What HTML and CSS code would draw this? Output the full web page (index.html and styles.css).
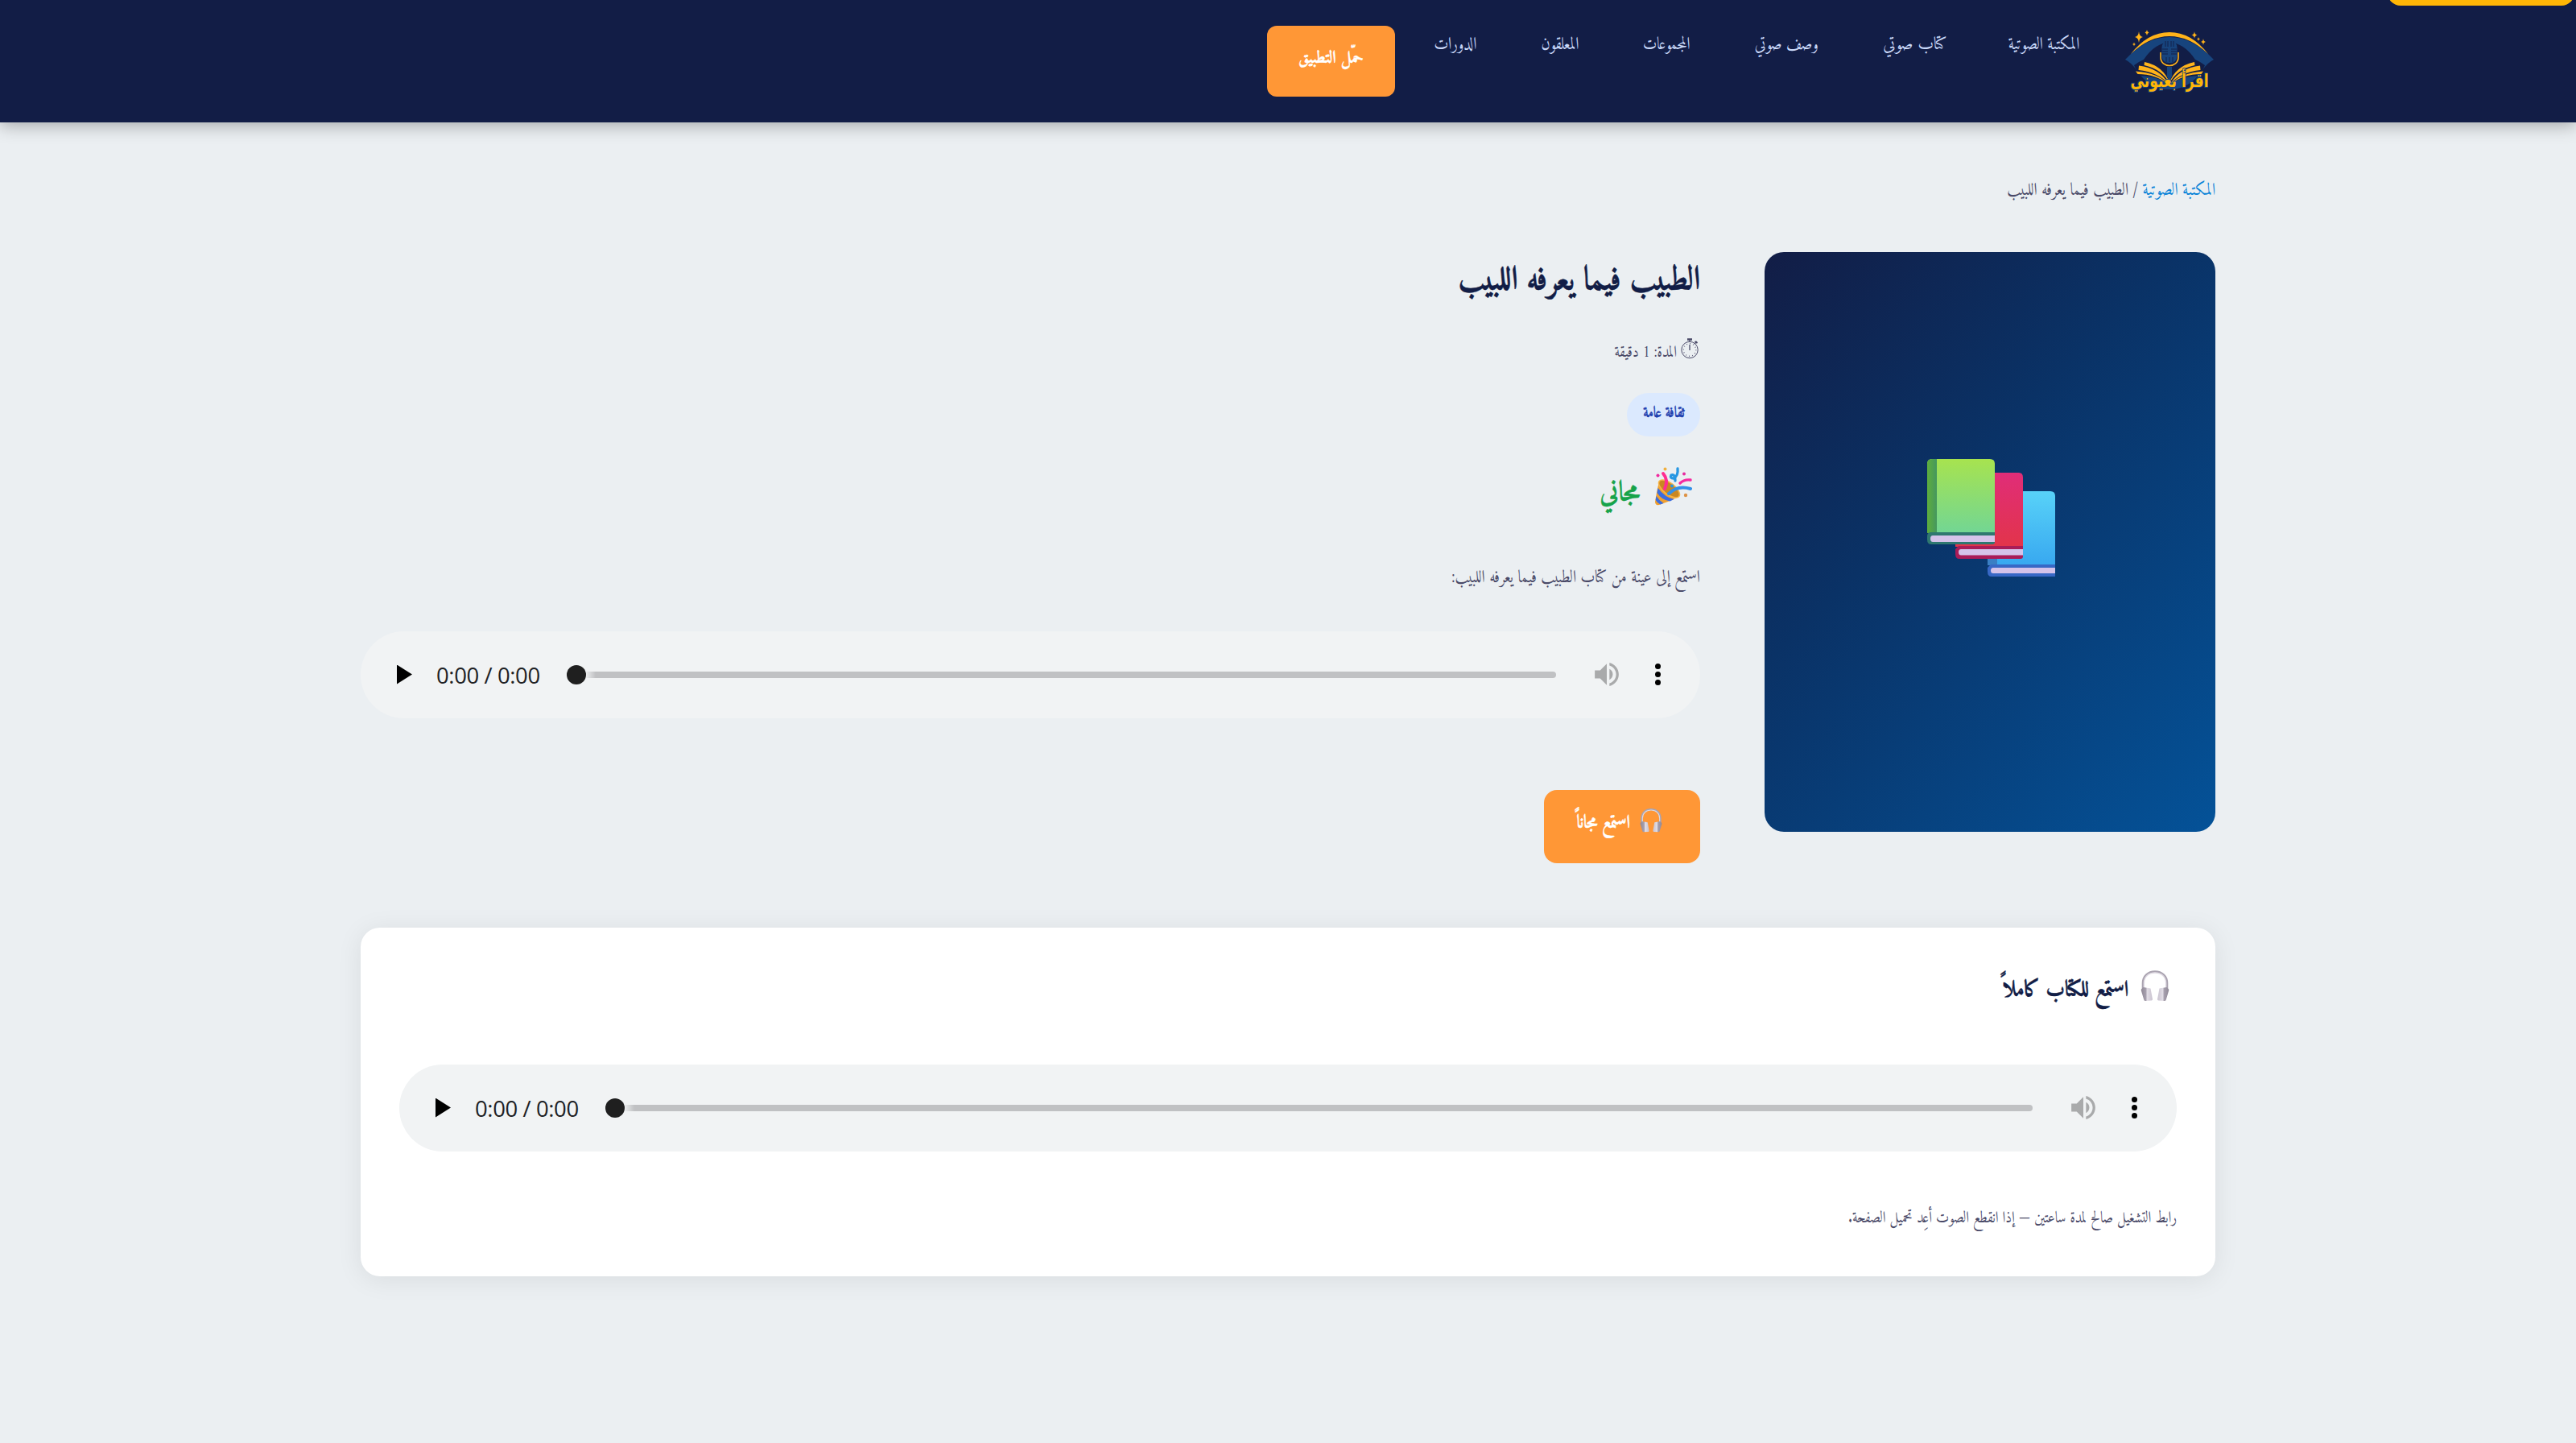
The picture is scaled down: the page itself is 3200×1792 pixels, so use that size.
FILE: index.html
```html
<!DOCTYPE html>
<html lang="ar" dir="rtl">
<head>
<meta charset="utf-8">
<title>الطبيب فيما يعرفه اللبيب</title>
<link rel="stylesheet" href="styles.css">
</head>
<body>
<svg class="defs" aria-hidden="true">
  <defs>
    <linearGradient id="hp" x1="0" y1="0" x2="1" y2="1"><stop offset="0" stop-color="#b5aebb"/><stop offset="1" stop-color="#d8d3dc"/></linearGradient>
    <linearGradient id="cupL" x1="0" x2="1"><stop offset="0" stop-color="#8f8896"/><stop offset=".45" stop-color="#a9a2b0"/><stop offset=".5" stop-color="#e3dfe7"/><stop offset="1" stop-color="#c9c2cf"/></linearGradient>
    <linearGradient id="cupR" x1="1" x2="0"><stop offset="0" stop-color="#8f8896"/><stop offset=".45" stop-color="#a9a2b0"/><stop offset=".5" stop-color="#e3dfe7"/><stop offset="1" stop-color="#c9c2cf"/></linearGradient>
    <symbol id="headphones" viewBox="0 0 36 38">
      <path d="M3 24V16C3 7 9.500 1.500 18 1.500S33 7 33 16v8" fill="none" stroke="#aaa3b0" stroke-width="2.600"/>
      <path d="M4.300 23v-7C4.300 8 10 3 18 3s13.700 5 13.700 13v7" fill="none" stroke="#ddd8e1" stroke-width="1.400"/>
      <path d="M1.500 23l2-2 9 1.500L15 36q0 1.300-1.300 1.500L6 38q-1.300 0-1.700-1.300L.8 25q-.3-1.300.7-2z" fill="url(#cupL)"/>
      <path d="M34.500 23l-2-2-9 1.500L21 36q0 1.300 1.300 1.500l7.700.5q1.300 0 1.700-1.300L35.200 25q.3-1.300-.7-2z" fill="url(#cupR)"/>
    </symbol>
    <symbol id="volume" viewBox="3 3.230 18 17.540"><path d="M3 9v6h4l5 5V4L7 9H3zm13.500 3A4.500 4.500 0 0 0 14 7.970v8.050c1.480-.73 2.500-2.250 2.500-4.020zM14 3.230v2.060c2.890.86 5 3.540 5 6.710s-2.110 5.850-5 6.710v2.060c4.010-.91 7-4.490 7-8.770s-2.990-7.860-7-8.770z"/></symbol>
  </defs>
</svg>

<a class="skip"></a>

<header class="header">
  <div class="header-inner">
    <svg class="logo" viewBox="0 0 110 78">
      <path d="M0 37Q26 9 55 9t55 28q-8 4-14 13-16 24-41 24T14 50Q8 41 0 37z" fill="#17447d"/>
      <path d="M23 37Q37 16 55 16t32 21L80 48 55 62 30 48z" fill="#121d46"/>
      <path d="M11 44l6-4 6-3 12 5 20 23-8-2q-14-6-30-6z" fill="#121d46"/><path d="M99 44l-6-4-6-3-12 5-20 23 8-2q14-6 30-6z" fill="#121d46"/>
      <path d="M7 30Q28 3 55 3t48 27Q80 8 55 8T7 30z" fill="#ffb31a"/>
      <path d="M17 44.500q25 3 37 22.500Q40 52.500 16.500 50zM24 40q24 5 31.500 27Q46 49 23.500 44zM15.500 55l-2.500-3.500q28 2 40.500 16Q38 55 15.500 55z" fill="#ffb31a"/>
      <path d="M93 44.500q-25 3-37 22.500 14-14.500 37.500-17zM86 40q-24 5-31.500 27Q64 49 86.500 44zM94.500 55l2.500-3.500q-28 2-40.500 16Q72 55 94.500 55z" fill="#ffb31a"/>
      <rect x="45.500" y="14" width="19" height="27" rx="8" fill="#17447d"/>
      <path d="M50 14v7M53 14v7M57 14v7M60 14v7M46 24h7M57 24h7M46 27h7M57 27h7M46 30h7M57 30h7M51 34v6M55 34v6M59 34v6" stroke="#121d46" stroke-width=".9"/>
      <path d="M44 28v6c0 14 22 14 22 0v-6" fill="none" stroke="#ffb31a" stroke-width="1.600"/>
      <path d="M52 46h6v12l-3 6-3-6z" fill="#17447d"/>
      <path d="M17 2q.5 6 5 7-4.500 1-5 7-.5-6-5-7 4.500-1 5-7zM27 0q.3 3 2.500 3.500Q27.300 4 27 7q-.3-3-2.500-3.500Q26.700 3 27 0zM11 15.500q.2 2.200 2 2.500-1.800.3-2 2.500-.2-2.200-2-2.500 1.800-.3 2-2.500zM86 2q.3 4 3.500 4.500Q86.300 7 86 11q-.3-4-3.500-4.500Q85.700 6 86 2zM97 11q.3 3.500 3 4-2.700.5-3 4-.3-3.500-3-4 2.700-.5 3-4zM91 9q.2 2.200 2 2.500-1.800.3-2 2.500-.2-2.200-2-2.500 1.800-.3 2-2.500z" fill="#ffb31a"/>
      <text class="logo-text" x="55" y="71" text-anchor="middle" textLength="97" lengthAdjust="spacingAndGlyphs">اقرأ بعيوني</text>
    </svg>
    <nav class="nav">
      <a><span>المكتبة الصوتية</span></a>
      <a><span>كتاب صوتي</span></a>
      <a><span>وصف صوتي</span></a>
      <a><span>المجموعات</span></a>
      <a><span>المعلقون</span></a>
      <a><span>الدورات</span></a>
    </nav>
    <a class="btn download"><span>حمّل التطبيق</span></a>
  </div>
</header>

<main class="main">
  <div class="breadcrumb"><a>المكتبة الصوتية</a> / الطبيب فيما يعرفه اللبيب</div>

  <section class="book">
    <div class="cover">
      <svg width="160" height="146" viewBox="0 0 160 146">
        <defs>
          <linearGradient id="g1" x2="0" y2="1"><stop stop-color="#a7e34f"/><stop offset="1" stop-color="#72d694"/></linearGradient>
          <linearGradient id="g2"><stop stop-color="#5eae3c"/><stop offset="1" stop-color="#45975f"/></linearGradient>
          <linearGradient id="r1" x2="0" y2="1"><stop stop-color="#e02d78"/><stop offset="1" stop-color="#e2344a"/></linearGradient>
          <linearGradient id="b1" x2="0" y2="1"><stop stop-color="#58d2f8"/><stop offset="1" stop-color="#38a8f0"/></linearGradient>
        </defs>
        <path d="M75 40h78q6 0 6 6v86H75z" fill="url(#b1)"/>
        <path d="M75 124h12v8H75z" fill="#3a7fc4"/>
        <path d="M79 131h80v15H80q-5 0-5-6v-5z" fill="#3868c6"/>
        <path d="M159 135H82q-3 0-3 3.500t3 3.500h77z" fill="#d5c3ea"/>
        <path d="M35 17h79q5 0 5 6v86H35z" fill="url(#r1)"/>
        <path d="M39 108h80v13q0 3-3 3H40q-5 0-5-6v-6z" fill="#a91c58"/>
        <path d="M119 112H42q-3 0-3 3.700t3 3.700h77z" fill="#d5c3ea"/>
        <path d="M6 0h72q6 0 6 6v86H0V6q0-6 6-6z" fill="url(#g1)"/>
        <path d="M6 0h6v92H0V6q0-6 6-6z" fill="url(#g2)"/>
        <path d="M5 91h79v12q0 3-3 3H5q-5 0-5-6v-4q0-5 5-5z" fill="#2f7870"/>
        <path d="M84 95H7q-3 0-3 4t3 4h77z" fill="#d5c3ea"/>
      </svg>
    </div>

    <div class="info">
      <h1 class="title">الطبيب فيما يعرفه اللبيب</h1>
      <div class="meta">
        <svg width="24" height="26" viewBox="0 0 24 26" fill="none" stroke="#4a4a68">
          <circle cx="11" cy="14.500" r="10.200" stroke-width="1"/>
          <path d="M11 8v7" stroke-width="1.300"/><path d="M8 1.500h6" stroke-width="2.600"/><path d="M11 2v3M17 7l3-3" stroke-width="1.200"/><path d="M17.500 4l3 2" stroke-width="2"/>
          <circle cx="11" cy="14.500" r="7.800" stroke-width="1.400" stroke-dasharray=".8 3.280"/>
        </svg>
        <span>المدة: 1 دقيقة</span>
      </div>
      <div class="badge"><span>ثقافة عامة</span></div>
      <div class="price">
        <svg width="46" height="48" viewBox="0 0 46 48">
          <path d="M5 18Q2 30 0 43q0 5 5 4 12-4 24-10z" fill="#f0a030"/>
          <ellipse cx="17.500" cy="27" rx="7" ry="15.500" transform="rotate(-52 17.500 27)" fill="#c98722" stroke="#f6b445" stroke-width="1.600"/>
          <path d="M3.500 26q9 12 20 14l-5 2.500Q8 41 2.500 32zM1.500 36q4 6 9 9l-4 1.500Q3 45 .7 41z" fill="#3a6de0"/>
          <path d="M10 8q7 8 2 19" fill="none" stroke="#ff2d90" stroke-width="4" stroke-linecap="round"/>
          <path d="M17 33q11-11 27-6" fill="none" stroke="#3390e8" stroke-width="4" stroke-linecap="round"/>
          <path d="M28 2q1 9-5 12-5 0-3-4 5-2 5 7" fill="none" stroke="#2797e2" stroke-width="3.300" stroke-linecap="round"/>
          <path d="M31 20q5-5 13-4" fill="none" stroke="#f52ba0" stroke-width="3.400" stroke-linecap="round"/>
          <circle cx="12.500" cy="2.500" r="2" fill="#f0b040"/><circle cx="3.500" cy="10.500" r="2" fill="#f02ba0"/><circle cx="36" cy="8.500" r="2" fill="#e62ba0"/><circle cx="21" cy="23.500" r="2" fill="#2797e2"/><circle cx="38" cy="35" r="2.200" fill="#dd9245"/>
        </svg>
        <span>مجاني</span>
      </div>
      <p class="desc">استمع إلى عينة من كتاب الطبيب فيما يعرفه اللبيب:</p>

      <div class="player" dir="ltr">
        <i class="play"></i><span class="time">0:00 / 0:00</span>
        <div class="track"><i class="thumb"></i></div>
        <svg class="volume"><use href="#volume"/></svg>
        <div class="dots"><i></i><i></i><i></i></div>
      </div>

      <a class="btn listen"><svg width="28" height="31"><use href="#headphones"/></svg><span>استمع مجاناً</span></a>
    </div>
  </section>

  <section class="full">
    <h2 class="subtitle"><svg width="36" height="38"><use href="#headphones"/></svg><span>استمع للكتاب كاملاً</span></h2>
    <div class="player" dir="ltr">
      <i class="play"></i><span class="time">0:00 / 0:00</span>
      <div class="track"><i class="thumb"></i></div>
      <svg class="volume"><use href="#volume"/></svg>
      <div class="dots"><i></i><i></i><i></i></div>
    </div>
    <p class="note">رابط التشغيل صالح لمدة ساعتين — إذا انقطع الصوت أعِد تحميل الصفحة.</p>
  </section>
</main>
</body>
</html>
```
FILE: styles.css
```css
* { box-sizing: border-box; }
body {
  margin: 0;
  min-height: 1792px;
  background: #ebeff2;
  color: #4a4a68;
  font: 22px/40px Amiri, "Liberation Serif", serif;
  white-space: nowrap;
  overflow: hidden;
}
h1, h2, p { margin: 0; }
svg { display: block; flex: none; }
.defs { position: absolute; width: 0; height: 0; }

.skip {
  position: absolute;
  top: -40px;
  left: 2966px;
  width: 232px;
  height: 46.500px;
  border-radius: 16px;
  background: #ffb606;
  z-index: 2;
}

.header {
  height: 152px;
  background: #121d46;
  box-shadow: 0 4px 20px rgba(0, 0, 0, .3);
}
.header-inner {
  display: flex;
  width: 2304px;
  height: 152px;
  margin: 0 auto;
  padding: 32px 2px 0 0;
}
.logo { width: 110px; height: 78px; margin-top: 5px; overflow: visible; }
.logo-text {
  font: bold 23px "DejaVu Sans", sans-serif;
  fill: #ffb606;
  stroke: #17447d;
  stroke-width: 2px;
  paint-order: stroke;
}

.nav span,
.breadcrumb,
.title,
.meta span,
.desc,
.note,
.price span,
.listen span,
.subtitle span { transform: scaleX(.86); transform-origin: right; }

.nav {
  display: flex;
  gap: 80px;
  margin: 4px 57px 0 49px;
  height: 40px;
  color: #c9d8f8;
}
.nav a { width: 80px; }
.nav span { display: inline-block; }
.nav a:nth-child(1) { width: 85px; }
.nav a:nth-child(1) span { transform: scaleX(.84); }
.nav a:nth-child(2) { width: 79px; }
.nav a:nth-child(2) span { transform: scaleX(.950); }
.nav a:nth-child(4) { width: 58px; }
.nav a:nth-child(4) span { transform: scaleX(.83); }
.nav a:nth-child(5) { width: 47px; }
.nav a:nth-child(5) span { transform: scaleX(.88); }
.nav a:nth-child(6) { width: 52px; }

.btn {
  display: flex;
  justify-content: center;
  background: #ff9736;
  color: #fff;
  font-weight: bold;
  -webkit-text-stroke: .4px;
}
.download {
  width: 159px;
  height: 88px;
  border-radius: 12px;
  font-size: 22px;
  line-height: 82px;
}
.download span { transform: scaleX(.93); }

.main { width: 2304px; margin: 0 auto; padding-top: 65px; }
.breadcrumb { height: 40px; }
.breadcrumb a { color: #0a84d8; }

.book {
  display: flex;
  gap: 80px;
  height: 759px;
  margin-top: 56px;
}
.cover {
  display: flex;
  flex: none;
  justify-content: center;
  align-items: flex-start;
  width: 560px;
  height: 720px;
  padding: 257px 0 0 3px;
  border-radius: 24px;
  background: linear-gradient(135deg, #121d46, #0a3266 40%, #045298);
}
.info { flex: 1; display: flex; flex-direction: column; align-items: flex-start; }
.title {
  height: 78px;
  font-size: 42px;
  line-height: 73px;
  color: #121d46;
  transform: scaleX(.9);
  -webkit-text-stroke: .5px;
}
.meta {
  display: flex;
  align-items: flex-start;
  gap: 5px;
  height: 40px;
  margin-top: 28px;
  font-size: 20px;
}
.meta svg { margin-top: 1px; }
.badge {
  display: flex;
  justify-content: center;
  width: 91px;
  height: 54px;
  margin-top: 29px;
  border-radius: 27px;
  background: #dbe9fe;
  color: #1e40af;
  font-size: 19px;
  font-weight: bold;
  line-height: 51px;
  -webkit-text-stroke: .4px;
}
.badge span { transform: scaleX(.86); }
.price {
  display: flex;
  gap: 19px;
  height: 60px;
  margin-top: 41px;
  padding-right: 10px;
  color: #16a34a;
  font-size: 35px;
  font-weight: bold;
  line-height: 60px;
  -webkit-text-stroke: .4px;
}
.price span { transform: scaleX(.9); }
.price svg { margin-top: -3px; }
.desc { height: 40px; margin-top: 55px; }

.player {
  display: flex;
  align-items: center;
  width: 100%;
  height: 108px;
  padding: 0 49px 0 45px;
  border-radius: 54px;
  background: #f1f3f4;
}
.info .player { margin-top: 46px; }
.play {
  width: 19px;
  height: 24px;
  margin-top: -1px;
  background: #000;
  clip-path: polygon(0 0, 100% 50%, 0 100%);
}
.time {
  width: 162px;
  padding: 2px 0 0 30px;
  color: #202124;
  font: 27.500px/40px "Open Sans", sans-serif;
  letter-spacing: -.4px;
}
.track {
  flex: 1;
  height: 8px;
  margin: -1px 0 0 30px;
  border-radius: 4px;
  background: linear-gradient(90deg, #f1f3f4 22px, #c0c1c3 36px);
}
.thumb {
  display: block;
  width: 24px;
  height: 24px;
  margin-top: -8px;
  border-radius: 50%;
  background: #1f1f1f;
}
.volume { width: 30px; height: 29px; margin: -1px 45px 0 48px; fill: #a9aaab; }
.dots { display: flex; flex-direction: column; gap: 3px; margin-top: -1px; }
.dots i { width: 7px; height: 7px; border-radius: 50%; background: #000; }

.listen {
  justify-content: flex-start;
  gap: 12px;
  width: 194px;
  height: 91px;
  margin-top: 89px;
  padding-right: 47px;
  border-radius: 16px;
  font-size: 23px;
  line-height: 84px;
}
.listen span { transform: scaleX(.9); }
.listen svg { margin-top: 22px; }

.full {
  height: 433px;
  margin-top: 80px;
  padding: 49px 48px 0;
  border-radius: 24px;
  background: #fff;
  box-shadow: 0 4px 32px rgba(0, 0, 0, .08);
}
.subtitle {
  display: flex;
  gap: 15px;
  height: 60px;
  margin-bottom: 61px;
  padding-right: 9px;
  color: #121d46;
  font-size: 28px;
  line-height: 59px;
  -webkit-text-stroke: .4px;
}
.subtitle span { transform: scaleX(.9); }
.subtitle svg { margin-top: 4px; }
.note { height: 40px; margin-top: 64px; font-size: 20px; }
```
